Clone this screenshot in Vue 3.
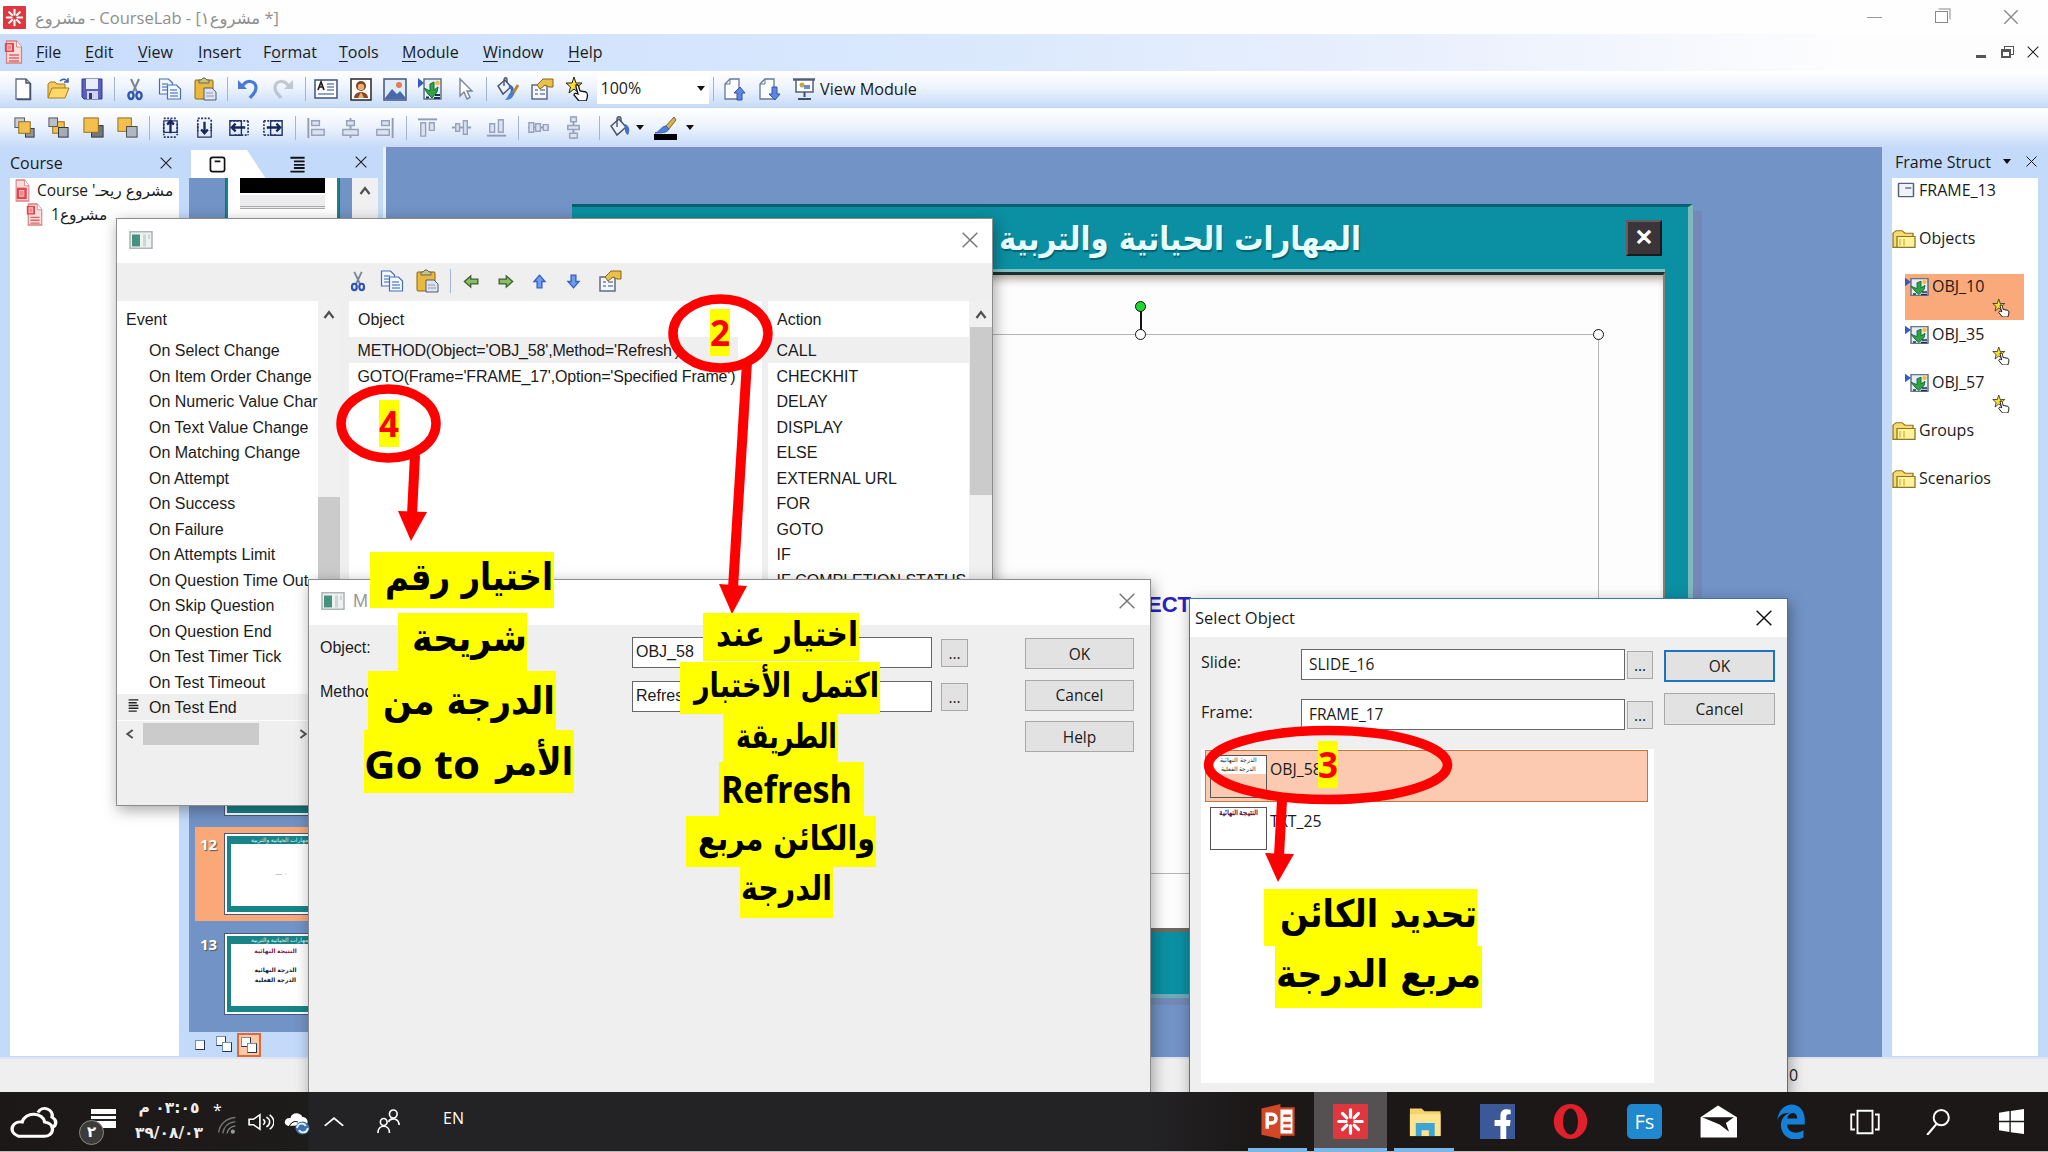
<script setup>
import { h } from 'vue';

const icons = {
  lab: '<rect width="24" height="24" rx="1" fill="#e0373f"/><g stroke="#fff" stroke-width="2.2" stroke-linecap="round"><path d="M12 4v5M12 15v5M4 12h5M15 12h5M6.5 6.5l3 3M14.5 14.5l3 3M17.500 6.500l-3 3M9.500 14.500l-3 3"/></g>',
  page: '<path d="M3 1h12l6 6v16H3z" fill="#fbdcdc" stroke="#d98080" stroke-width="1.500"/><path d="M15 1v6h6" fill="#fff" stroke="#d98080"/><rect x="1" y="3" width="11" height="9" fill="#e2474f"/><rect x="4" y="5" width="5" height="5" fill="#f08a8a" stroke="#fbd0d0"/><path d="M6 15h12M6 18h12M6 21h12" stroke="#d66" stroke-width="1.500"/>',
  project: '<path d="M3 1h12l6 6v16H3z" fill="#fbdcdc" stroke="#d98080" stroke-width="1.500"/><path d="M15 1v6h6" fill="#fff" stroke="#d98080"/><rect x="4" y="9" width="14" height="12" fill="#e2474f"/><rect x="8" y="12" width="6" height="6" fill="#f08a8a" stroke="#fbd0d0"/>',
  new: '<path d="M5 2h10l4 4v16H5z" fill="#fff" stroke="#5f6a80" stroke-width="1.300"/><path d="M15 2v4h4M19.500 6v16.500H6" fill="none" stroke="#48526a" stroke-width="1.500"/>',
  open: '<path d="M2 21V7l2-2h5l2 2h8v4" fill="#f3c95b" stroke="#a87a1c"/><path d="M2 21l4-10h17l-4 10z" fill="#ffd868" stroke="#a87a1c"/><path d="M14 4c3-3 6-2 8 1M22 1v4h-4" fill="none" stroke="#3c5ea8" stroke-width="1.500"/>',
  save: '<path d="M2 2h20v20H4l-2-2z" fill="#5c5fc0" stroke="#34388c"/><rect x="6" y="2" width="12" height="10" fill="#e9eefb"/><rect x="7" y="14" width="11" height="8" fill="#cfd4e8"/><rect x="9" y="16" width="3" height="6" fill="#34388c"/>',
  cut: '<path d="M8 2l6 13M16 2l-6 13" stroke="#7b8597" stroke-width="2"/><g fill="none" stroke="#2f55b4" stroke-width="2.400"><ellipse cx="8" cy="18.500" rx="2.600" ry="3.500"/><ellipse cx="16" cy="18.500" rx="2.600" ry="3.500"/></g>',
  copy: '<g fill="#f4f8ff" stroke="#4a6cb5" stroke-width="1.200"><path d="M1.500 2h9l4 4v11h-13z"/><path d="M9.500 8h9l4 4v10h-13z"/></g><path d="M4 7h6M4 10h5M4 13h5M12 13h7M12 16h8M12 19h8" stroke="#6f90d6" stroke-width="1.300"/>',
  paste: '<rect x="2" y="3" width="18" height="19" rx="1" fill="#eab93c" stroke="#8a6414"/><path d="M6 5V3h2l2-2h2l2 2h2v3H6z" fill="#c8c47a" stroke="#666"/><path d="M11 11h8l4 4v8H11z" fill="#dfe3ee" stroke="#4c5a7a"/><path d="M13 16h7M13 19h8" stroke="#8c98b4"/>',
  undo: '<path d="M2 3v9h9z" fill="#4a78d4"/><path d="M6 10C10 2 20 3 20 11c0 5-4 7-6 10" fill="none" stroke="#4a78d4" stroke-width="3.200"/>',
  redo: '<g opacity=".6"><path d="M22 3v9h-9z" fill="#a3aab6"/><path d="M18 10C14 2 4 3 4 11c0 5 4 7 6 10" fill="none" stroke="#a3aab6" stroke-width="3.200"/></g>',
  textbox: '<rect x="1" y="3" width="22" height="18" fill="#fff" stroke="#4d5c80" stroke-width="1.600"/><path d="M4 13l3-8 3 8M5 10h4" fill="none" stroke="#222" stroke-width="1.700"/><path d="M13 7h7M13 10h7M13 13h7M4 17h16" stroke="#6c86ba" stroke-width="1.300"/>',
  person: '<rect x="2" y="2" width="20" height="21" fill="#fff" stroke="#333" stroke-width="1.600"/><circle cx="12" cy="9" r="5" fill="#7a4428"/><circle cx="12" cy="10" r="3.200" fill="#eeb070"/><path d="M5 21c0-8 14-8 14 0z" fill="#8b4a2a"/><path d="M12 15l-3 6h6z" fill="#e8b080"/>',
  picture: '<rect x="1" y="2" width="22" height="21" fill="#dfeafb" stroke="#4d5c80" stroke-width="1.600"/><circle cx="16" cy="8" r="3" fill="#e77a52"/><path d="M2 21l7-9 5 5 3-3 5 6v2H2z" fill="#4868ae"/>',
  object: '<rect x="6" y="2" width="17" height="20" fill="#e6edf9" stroke="#5c6883" stroke-width="1.400"/><path d="M0 1l6 5-6 5z" fill="#3a58c4"/><path d="M6 11l4 6 4 4 5-6 1-5-4 3V5l-4 2v7z" fill="#2fa447" stroke="#166a2c"/><circle cx="19.500" cy="6" r="2.300" fill="#f3bc3a"/><path d="M8 20.500h3M17 18h5M16 21h6" stroke="#222d5a" stroke-width="1.800"/>',
  pointer: '<path d="M7 2v17l4-4 3 7 3-1.500-3-6.500h5z" fill="#fff" stroke="#7b8494" stroke-width="1.400"/>',
  bucket: '<path d="M3 10l8-7 7 8-9 8z" fill="#eef3fc" stroke="#48546e" stroke-width="1.500"/><path d="M9 11V3c0-3 4-3 4 0v3" fill="none" stroke="#48546e" stroke-width="1.400"/><path d="M17 8c5 2 5 7 3 11-3-1-4-7-3-11z" fill="#4471c6"/>',
  paint: '<path d="M2 9l7-6 6 7-8 7z" fill="#eef3fc" stroke="#48546e" stroke-width="1.500"/><path d="M8 9V3c0-3 3-3 3 0v3" fill="none" stroke="#48546e" stroke-width="1.400"/><path d="M13 9c4 1 4 5 2 9" stroke="#3a67c4" stroke-width="3" fill="none"/><path d="M22 8l-6 10" stroke="#b5893a" stroke-width="3"/><path d="M18 15c0 5-3 8-9 8 3-2 3-6 6-8z" fill="#4c7fd4"/>',
  props: '<rect x="2" y="8" width="15" height="14" fill="#f4f7fd" stroke="#56617c" stroke-width="1.400"/><path d="M5 13h3M10 13h5M5 17h3M10 17h5" stroke="#7284ac" stroke-width="1.600"/><path d="M7 8l6-6h10v8h-4l-4-2-5 4z" fill="#e9c04a" stroke="#856617"/>',
  star: '<path d="M9 0l2 6h6l-4.500 4L14 16 9 12l-5 4 1.500-6L1 6h6z" fill="#f8dd37" stroke="#222"/><path d="M11 8c2-1 3 1 3 3l1 3 6 1c2 1 2 5 0 9h-7l-5-6c0-2 2-2 4-1L11 10z" fill="#fff" stroke="#111" stroke-width="1.300"/>',
  import: '<path d="M3 22V7l5-5h9v20z" fill="#fbfcff" stroke="#6a7694" stroke-width="1.300"/><path d="M3 7h5V2" fill="none" stroke="#6a7694"/><path d="M18 10l5 6h-3v7h-5v-7h-3z" fill="#5f86df" stroke="#3253a8"/>',
  export: '<path d="M3 22V7l5-5h9v20z" fill="#fbfcff" stroke="#6a7694" stroke-width="1.300"/><path d="M3 7h5V2" fill="none" stroke="#6a7694"/><path d="M18 23l5-6h-3v-7h-5v7h-3z" fill="#5f86df" stroke="#3253a8"/>',
  screen: '<path d="M1 2.500h22" stroke="#555f7c" stroke-width="2.500"/><rect x="4" y="3" width="17" height="12" fill="#fff" stroke="#555f7c" stroke-width="1.500"/><circle cx="10" cy="8" r="2.500" fill="#c4a83a"/><rect x="12" y="8" width="6" height="4" fill="#6b8bcc"/><path d="M12.500 15v5M6 22h13" stroke="#444c66" stroke-width="2"/>',
  front: '<rect x="2" y="2" width="10" height="10" fill="#c9ced8" stroke="#555"/><rect x="13" y="13" width="9" height="9" fill="#8f95a3" stroke="#333"/><rect x="6" y="6" width="12" height="12" fill="#f3c04e" stroke="#8d6c1e"/>',
  back: '<rect x="6" y="6" width="12" height="12" fill="#f3c04e" stroke="#8d6c1e"/><rect x="2" y="2" width="9" height="9" fill="#b9bfcb" stroke="#555"/><rect x="12" y="12" width="10" height="10" fill="#a3aab8" stroke="#333"/>',
  forward: '<rect x="10" y="10" width="12" height="12" fill="#6f7686" stroke="#333"/><rect x="2" y="2" width="15" height="15" fill="#f3c04e" stroke="#8d6c1e"/>',
  backward: '<rect x="2" y="2" width="14" height="14" fill="#f3c04e" stroke="#8d6c1e"/><rect x="11" y="11" width="11" height="11" fill="#b0b6c3" stroke="#444"/>',
  alignTop: '<path d="M5 2.500h14M5 22h14M5 8v12M19 8v12" stroke="#27356a" stroke-width="1.800" stroke-dasharray="2 1.500"/><path d="M5 5h14v12H5z" fill="none" stroke="#27356a" stroke-width="1.300"/><path d="M12 18V5M8.500 9L12 5l3.500 4" fill="none" stroke="#19265c" stroke-width="2.400"/>',
  alignBottom: '<path d="M5 2.500h14M5 4v12M19 4v12" stroke="#27356a" stroke-width="1.800" stroke-dasharray="2 1.500"/><path d="M5 8v14h14V8" fill="none" stroke="#27356a" stroke-width="1.300"/><path d="M12 6v12M8.500 14l3.500 4 3.500-4" fill="none" stroke="#19265c" stroke-width="2.400"/>',
  alignLeft: '<path d="M3 5v15h12V5z" fill="none" stroke="#27356a" stroke-width="1.500"/><path d="M22 5v15M3 5h19M8 20h14" stroke="#27356a" stroke-width="1.800" stroke-dasharray="2 1.500"/><path d="M19 12H5M9 8l-4 4 4 4" fill="none" stroke="#19265c" stroke-width="2.400"/>',
  alignRight: '<path d="M9 5v15h12V5z" fill="none" stroke="#27356a" stroke-width="1.500"/><path d="M2 5v15M2 5h19M2 20h14" stroke="#27356a" stroke-width="1.800" stroke-dasharray="2 1.500"/><path d="M5 12h14M15 8l4 4-4 4" fill="none" stroke="#19265c" stroke-width="2.400"/>',
  gLeft: '<path d="M3.500 2v21" stroke="#929cb3" stroke-width="2"/><path d="M7 5h8v5H7zM7 14h13v6H7z" fill="#dbe3f3" stroke="#98a2b8" stroke-width="1.500"/>',
  gCenter: '<path d="M12 2v21" stroke="#929cb3" stroke-width="2"/><path d="M8 5h8v5H8zM4 14h16v6H4z" fill="#dbe3f3" stroke="#98a2b8" stroke-width="1.500"/>',
  gRight: '<path d="M20.500 2v21" stroke="#929cb3" stroke-width="2"/><path d="M9 5h8v5H9zM4 14h13v6H4z" fill="#dbe3f3" stroke="#98a2b8" stroke-width="1.500"/>',
  gTop: '<path d="M2 3.500h20" stroke="#929cb3" stroke-width="2"/><path d="M5 7h5v14H5zM14 7h5v8h-5z" fill="#dbe3f3" stroke="#98a2b8" stroke-width="1.500"/>',
  gMiddle: '<path d="M2 12h20" stroke="#929cb3" stroke-width="2"/><path d="M6 8h4v8H6zM14 5h4v14h-4z" fill="#dbe3f3" stroke="#98a2b8" stroke-width="1.500"/>',
  gBottom: '<path d="M2 20.500h20" stroke="#929cb3" stroke-width="2"/><path d="M5 8h5v9H5zM14 4h5v13h-5z" fill="#dbe3f3" stroke="#98a2b8" stroke-width="1.500"/>',
  gHoriz: '<path d="M1 12h22" stroke="#929cb3" stroke-width="2"/><path d="M2 7h5v10H2zM9 8h5v8H9zM17 9h5v6h-5z" fill="#dbe3f3" stroke="#98a2b8" stroke-width="1.500"/>',
  gVert: '<path d="M12 0v24" stroke="#929cb3" stroke-width="2"/><path d="M9 1h6v5H9zM6 10h12v4H6zM8 18h8v5H8z" fill="#dbe3f3" stroke="#98a2b8" stroke-width="1.500"/>',
  pen: '<path d="M21 1l2 3-8 10-3-3z" fill="#d9b258" stroke="#80622a"/><path d="M13 10l3 3c-2 4-8 4-14 4 5-1 5-6 11-7z" fill="#4d83d6" stroke="#3460a8"/><path d="M1 18h23v6H1z" fill="#000"/>',
  left: '<path d="M3 12l8-7v4h9v6h-9v4z" fill="#86bf5e" stroke="#3f5f35" stroke-width="1.700"/>',
  right: '<path d="M21 12l-8-7v4H4v6h9v4z" fill="#86bf5e" stroke="#3f5f35" stroke-width="1.700"/>',
  up: '<path d="M12 4l7 8h-4v8H9v-8H5z" fill="#6f9cf2" stroke="#3560bb" stroke-width="1.700"/>',
  down: '<path d="M12 20l7-8h-4V4H9v8H5z" fill="#6f9cf2" stroke="#3560bb" stroke-width="1.700"/>',
  close: '<path d="M4 4l16 16M20 4L4 20" stroke="currentColor" stroke-width="1.600" fill="none"/>',
  caretUp: '<path d="M6 16l6-8 6 8" stroke="#505050" stroke-width="3" fill="none"/>',
  caretLeft: '<path d="M16 6l-8 6 8 6" stroke="#505050" stroke-width="3" fill="none"/>',
  caretRight: '<path d="M8 6l8 6-8 6" stroke="#505050" stroke-width="3" fill="none"/>',
  form: '<rect x="1" y="3" width="22" height="18" fill="#eef1f1" stroke="#a9b2b2" stroke-width="1.500"/><rect x="3" y="6" width="8" height="13" fill="#47917f"/><path d="M14 6h3v13h-3zM19 6h2v5h-2z" fill="#cdd5d5"/>',
  folder: '<path d="M1 22V5l3-3h6l3 3h8v17z" fill="#f4dd6c" stroke="#8d7726" stroke-width="1.300"/><path d="M5 22V9h18v13z" fill="#fff29b" stroke="#8d7726" stroke-width="1.300"/><path d="M8 12v8M12 12v8" stroke="#d9c04f" stroke-width="1.500"/>',
  frame: '<rect x="2" y="2" width="20" height="20" rx="1" fill="#eef3fb" stroke="#56617c" stroke-width="2"/><path d="M11 9h8" stroke="#56617c" stroke-width="2"/>',
  slideTab: '<rect x="2" y="2" width="20" height="20" rx="3" fill="none" stroke="#111" stroke-width="2.400"/><path d="M8 7.500h8" stroke="#111" stroke-width="2.400"/>',
  outline: '<path d="M2 2.500h20M7 7.500h15M7 12.500h15M7 17h15M2 22h20" stroke="#111" stroke-width="2.600"/>',
  lines: '<path d="M3 3h18M3 7.500h15M3 12h18M3 16.500h18M3 21h15" stroke="#222" stroke-width="2.300"/>',
  cloud: '<path d="M5 20c-6-3-3-10 2-9C9 4 18 5 19 11c6 1 5 9 0 9z" transform="translate(-.500 1) scale(.94 1)" fill="none" stroke="#fff" stroke-width="1.800"/><path d="M14 6c2-5 8-2 7 3 3 2 2 6-.500 7" fill="none" stroke="#fff" stroke-width="1.700"/>',
  sound: '<g fill="none" stroke="#fff" stroke-width="1.500"><path d="M1 9h4l6-5v16l-6-5H1zM14 9c2 2 2 4 0 6M17 6.500c4 3 4 8 0 11M20 4c5 5 5 11 0 16"/></g>',
  wifi: '<g fill="none" stroke-width="1.700"><path d="M2 21C3 11 11 4 22 3" stroke="#777"/><path d="M7 22C8 15 13 9 22 8" stroke="#777"/><path d="M12 22c1-5 4-8 10-9" stroke="#888"/></g><circle cx="19" cy="20" r="2.500" fill="#999"/>',
  sync: '<path d="M4 15C-2 13 1 6 6 7c1-6 9-6 11-1 4 0 6 4 4 8z" fill="#fff"/><path d="M5 15c2-4 5-5 8-4" fill="none" stroke="#1c1817"/><circle cx="17" cy="17" r="6.500" fill="#3a72b0"/><path d="M12 17c1-6 7-5 8-2M22 17c-1 6-7 5-8 2" stroke="#e8f2ff" stroke-width="1.800" fill="none"/>',
  chevron: '<path d="M2 17l10-10 10 10" fill="none" stroke="#fff" stroke-width="2.200"/>',
  people: '<g fill="none" stroke="#fff" stroke-width="1.700"><circle cx="7" cy="13" r="3.500"/><path d="M1 24c0-9 12-9 12 0"/><circle cx="17" cy="5" r="4"/><path d="M12 13c2-5 11-4 11 3"/></g>',
  ppt: '<path d="M13 3h10v18H13z" fill="#fff" stroke="#d24726" stroke-width="1.500"/><path d="M16 8h5M16 13h5M16 17h5" stroke="#d24726" stroke-width="1.700"/><path d="M1 3l13-3v24L1 21z" fill="#d24726"/><path d="M5 17V7h3c4 0 4 6 0 6H5" fill="none" stroke="#fff" stroke-width="2.400"/>',
  explorer: '<path d="M2 3h8l2 2h11v17H2z" fill="#f5d36b"/><path d="M2 7h21v15H2z" fill="#ffe490"/><path d="M6 22v-9h13v9h-4v-4h-5v4z" fill="#3da4d8"/>',
  facebook: '<rect width="24" height="24" fill="#3b5998"/><path d="M14 24v-9h-4v-4h4V8c0-4 3-5 7-4v3c-3 0-3 0-3 4h3l-.5 4H18v9z" fill="#fff"/>',
  opera: '<ellipse cx="12" cy="12" rx="11.500" ry="12" fill="#e0202c"/><ellipse cx="12" cy="12" rx="5.200" ry="9" fill="#1c1817"/>',
  blue: '<rect width="24" height="24" rx="3.500" fill="#2088cf"/>',
  mail: '<path d="M1 9L12 1l12 8v14H1z" fill="#fff"/><path d="M2 9h20l-5 4 2 6-6-5z" fill="#1c1817"/>',
  edge: '<path d="M1 11C3-3 22-3 23 10v4H9c0 6 8 7 13 4v5C13 27 3 22 4 13c1-4 4-6 7-7-7 0-9 3-10 5zM9 10h8c0-5-7-5-8 0z" fill="#1580d8"/>',
  taskview: '<g fill="none" stroke="#fff" stroke-width="1.500"><path d="M6 3h12v18H6zM4 6H1v12h3M20 6h3v12h-3"/></g>',
  search: '<circle cx="15" cy="8" r="7" fill="none" stroke="#fff" stroke-width="1.800"/><path d="M10.500 14L2 24" stroke="#fff" stroke-width="2"/>',
  windows: '<path d="M0 3.500l10-1.500v9.300H0zM11.300 1.800L24 0v11.300H11.300zM0 12.700h10V22L0 20.500zM11.300 12.700H24V24l-12.700-1.800z" fill="#fff"/>'
};

const Icon = (props) => h('svg', {
  viewBox: '0 0 24 24',
  width: props.w || props.size || 24,
  height: props.size || 24,
  preserveAspectRatio: 'none',
  innerHTML: icons[props.name]
});
Icon.props = ['name', 'size', 'w'];

const menus = ['File', 'Edit', 'View', 'Insert', 'Format', 'Tools', 'Module', 'Window', 'Help'];
const menuKeys = { Format: 1 };
const menuWidths = [49, 53, 60, 65, 76, 63, 81, 85, 60];

const mainTools = [
  ['new', 'open', 'save'],
  ['cut', 'copy', 'paste'],
  ['undo', 'redo'],
  ['textbox', 'person', 'picture', 'object', 'pointer'],
  ['paint', 'props', 'star']
];
const arrangeTools = [
  ['front', 'back', 'forward', 'backward'],
  ['alignTop', 'alignBottom', 'alignLeft', 'alignRight'],
  ['gLeft', 'gCenter', 'gRight'],
  ['gTop', 'gMiddle', 'gBottom'],
  ['gHoriz', 'gVert']
];
const actionTools = ['left', 'right', 'up', 'down', 'props'];

const events = [
  'On Select Change', 'On Item Order Change', 'On Numeric Value Char', 'On Text Value Change',
  'On Matching Change', 'On Attempt', 'On Success', 'On Failure', 'On Attempts Limit',
  'On Question Time Out', 'On Skip Question', 'On Question End', 'On Test Timer Tick',
  'On Test Timeout', 'On Test End'
];
const actions = ['CALL', 'CHECKHIT', 'DELAY', 'DISPLAY', 'ELSE', 'EXTERNAL URL', 'FOR', 'GOTO', 'IF', 'IF COMPLETION STATUS'];

const frameTree = [
  { text: 'FRAME_13', icon: 'frame' },
  { text: 'Objects', icon: 'folder' },
  { text: 'OBJ_10', icon: 'object', active: true },
  { text: 'OBJ_35', icon: 'object' },
  { text: 'OBJ_57', icon: 'object' },
  { text: 'Groups', icon: 'folder' },
  { text: 'Scenarios', icon: 'folder' }
];

// highlighted note lines: box x, y, w, h, then text x, width, baseline and size
const notes = [
  { x: 370, y: 552, w: 184, h: 56, tx: 385, tw: 168, b: 590, fs: 38, text: 'اختيار رقم' },
  { x: 398, y: 613, w: 129, h: 58, tx: 412, tw: 115, b: 651, fs: 38, text: 'شريحة' },
  { x: 368, y: 671, w: 188, h: 59, tx: 383, tw: 172, b: 714, fs: 38, text: 'الدرجة من' },
  { x: 364, y: 730, w: 210, h: 63, tx: 496, tw: 77, b: 775, fs: 38, text: 'الأمر' },
  { x: 703, y: 613, w: 156, h: 48, tx: 716, tw: 142, b: 646, fs: 34, text: 'اختيار عند' },
  { x: 680, y: 662, w: 200, h: 52, tx: 694, tw: 185, b: 697, fs: 34, text: 'اكتمل الأختبار' },
  { x: 723, y: 714, w: 115, h: 49, tx: 736, tw: 101, b: 748, fs: 34, text: 'الطريقة' },
  { x: 719, y: 762, w: 145, h: 54, tx: 721, tw: 131, b: 803, fs: 37, text: 'Refresh', latin: true },
  { x: 686, y: 816, w: 190, h: 51, tx: 698, tw: 177, b: 850, fs: 34, text: 'والكائن مربع' },
  { x: 740, y: 867, w: 93, h: 51, tx: 741, tw: 91, b: 900, fs: 34, text: 'الدرجة' },
  { x: 1264, y: 889, w: 213, h: 57, tx: 1280, tw: 197, b: 927, fs: 38, text: 'تحديد الكائن' },
  { x: 1275, y: 946, w: 207, h: 62, tx: 1276, tw: 205, b: 987, fs: 38, text: 'مربع الدرجة' }
];
const marks = [
  { n: 2, x: 710, y: 309, cx: 720.5, cy: 333.5, rx: 47.5, ry: 34.5, line: 'M747 362L733 588', head: '719,584 747,586 732,614' },
  { n: 4, x: 379, y: 400, cx: 388.5, cy: 423.5, rx: 47.5, ry: 34.5, line: 'M415 455L412 515', head: '398,511 427,512 411,541' },
  { n: 3, x: 1318, y: 741, cx: 1328, cy: 765, rx: 119.5, ry: 34.5, line: 'M1282 800L1279 856', head: '1265,853 1294,854 1278,882' }
];

const taskApps = [
  { icon: 'ppt', open: true },
  { icon: 'lab', open: true, active: true },
  { icon: 'explorer', open: true },
  { icon: 'facebook' },
  { icon: 'opera' },
  { icon: 'blue', label: 'Fs' },
  { icon: 'mail' },
  { icon: 'edge' },
  { icon: 'taskview', size: 30 },
  { icon: 'search', size: 26 },
  { icon: 'windows', size: 25 }
];
</script>

<template>
  <div class="screen">
    <header class="titlebar">
      <Icon name="lab" :size="23" />
      <span class="title">مشروع - CourseLab - [مشروع١ *]</span>
      <div class="window-buttons">
        <span class="minimize"></span>
        <span class="restore"></span>
        <Icon name="close" :size="20" />
      </div>
    </header>

    <nav class="menubar">
      <Icon name="page" :w="20" :size="24" class="menu-icon" />
      <span v-for="(m, i) in menus" :key="m" class="menu" :style="{ width: menuWidths[i] + 'px' }">{{ m.slice(0, menuKeys[m] || 0) }}<u>{{ m[menuKeys[m] || 0] }}</u>{{ m.slice((menuKeys[m] || 0) + 1) }}</span>
      <div class="child-buttons">
        <span class="child-min"></span>
        <span class="child-restore"></span>
        <Icon name="close" :size="16" />
      </div>
    </nav>

    <div class="toolbar first">
      <template v-for="(group, g) in mainTools" :key="g">
        <span v-if="g" class="sep"></span>
        <span v-for="t in group" :key="t" class="tool"><Icon :name="t" /></span>
      </template>
      <div class="zoom-box">
        <span>100%</span>
        <i class="tri"></i>
      </div>
      <span class="sep"></span>
      <span class="tool"><Icon name="import" /></span>
      <span class="tool"><Icon name="export" /></span>
      <span class="tool"><Icon name="screen" /></span>
      <span class="view-module">View Module</span>
    </div>

    <div class="toolbar second">
      <template v-for="(group, g) in arrangeTools" :key="g">
        <span v-if="g" class="sep"></span>
        <span v-for="t in group" :key="t" class="tool"><Icon :name="t" :size="23" /></span>
      </template>
      <span class="sep wide"></span>
      <span class="tool narrow"><Icon name="bucket" /></span>
      <i class="tri"></i>
      <span class="tool pen"><Icon name="pen" /></span>
      <i class="tri"></i>
    </div>

    <main class="work">
      <section class="course">
        <div class="panel-head">
          <span>Course</span>
          <Icon name="close" :size="16" />
        </div>
        <div class="course-tree">
          <div class="course-row"><Icon name="project" :w="17" :size="23" /><span>Course <bdi dir="rtl">مشروع ريحـ'</bdi></span></div>
          <div class="course-row child"><Icon name="page" :w="18" :size="23" /><span dir="rtl">مشروع1</span></div>
        </div>
      </section>

      <section class="slides">
        <div class="slide-tabs">
          <span class="slide-tab active"><Icon name="slideTab" :size="17" /></span>
          <span class="slide-tab"><Icon name="outline" :size="17" /></span>
          <Icon name="close" :size="16" />
        </div>
        <div class="slide-body">
          <div class="slide-list">
            <div class="thumb cut-top">
              <div class="thumb-black"></div>
              <div class="thumb-line"></div>
            </div>
            <div class="slide-gap"></div>
            <div class="thumb cut-bottom"></div>
            <div class="slide-row active">
              <b>12</b>
              <div class="thumb">
                <span class="thumb-title">المهارات الحياتية والتربية</span>
                <div class="thumb-page"><small>— ٠</small></div>
              </div>
            </div>
            <div class="slide-row">
              <b>13</b>
              <div class="thumb">
                <span class="thumb-title">المهارات الحياتية والتربية</span>
                <div class="thumb-page result"><em>النتيجة النهائية</em><span>الدرجة النهائية</span><span>الدرجة الفعلية</span></div>
              </div>
            </div>
          </div>
          <div class="slide-scroll"><Icon name="caretUp" :size="18" /></div>
        </div>
        <div class="slide-modes">
          <i class="mode"></i>
          <span class="mode-box"><i class="mode a"></i><i class="mode b"></i></span>
          <span class="mode-box active"><i class="mode a"></i><i class="mode b"></i></span>
        </div>
      </section>

      <section class="canvas">
        <div class="slide">
          <div class="slide-head">
            <svg class="slide-title" width="380" height="60">
              <text x="8" y="38" textLength="362" lengthAdjust="spacingAndGlyphs">المهارات الحياتية والتربية</text>
            </svg>
            <span class="slide-close">✕</span>
          </div>
          <div class="slide-page">
            <div class="selection">
              <i class="stem"></i>
              <i class="handle green"></i>
              <i class="handle top"></i>
              <i class="handle corner"></i>
              <b>OBJECT</b>
            </div>
          </div>
        </div>
      </section>

      <section class="struct">
        <div class="panel-head">
          <span>Frame Struct</span>
          <i class="tri"></i>
          <Icon name="close" :size="15" />
        </div>
        <div class="struct-tree">
          <div v-for="row in frameTree" :key="row.text" class="struct-row" :class="{ object: row.icon === 'object', active: row.active }">
            <Icon :name="row.icon" :w="row.icon === 'frame' ? 18 : 24" :size="row.icon === 'frame' ? 16 : 20" />
            <span>{{ row.text }}</span>
            <Icon v-if="row.icon === 'object'" name="star" :size="18" class="row-star" />
          </div>
        </div>
      </section>
    </main>

    <div class="statusbar"><span>0</span></div>

    <!-- action editor window -->
    <div class="dialog actions">
      <div class="dialog-title">
        <Icon name="form" :w="24" :size="22" />
        <Icon name="close" :size="22" class="dialog-close" />
      </div>
      <div class="action-tools">
        <Icon name="cut" :size="22" />
        <Icon name="copy" />
        <Icon name="paste" />
        <span class="sep"></span>
        <Icon v-for="t in actionTools" :key="t" :name="t" :size="t === 'props' ? 24 : 19" />
      </div>
      <div class="action-body">
        <div class="event-pane">
          <div class="event-main">
            <div class="event-list">
              <div class="list-head">Event</div>
              <div v-for="e in events" :key="e" class="list-row" :class="{ picked: e === 'On Test End' }">
                <Icon v-if="e === 'On Test End'" name="lines" :w="13" :size="15" class="row-mark" />{{ e }}
              </div>
            </div>
            <div class="vscroll">
              <Icon name="caretUp" :size="18" />
              <div class="vthumb event"></div>
            </div>
          </div>
          <div class="hscroll">
            <Icon name="caretLeft" :size="16" />
            <div class="hthumb"></div>
            <Icon name="caretRight" :size="16" />
          </div>
        </div>
        <div class="object-list">
          <div class="list-head">Object</div>
          <div class="list-row picked">METHOD(Object='OBJ_58',Method='Refresh')</div>
          <div class="list-row">GOTO(Frame='FRAME_17',Option='Specified Frame')</div>
        </div>
        <div class="action-list">
          <div class="list-head">Action</div>
          <div v-for="a in actions" :key="a" class="list-row" :class="{ picked: a === 'CALL' }">{{ a }}</div>
        </div>
        <div class="vscroll">
          <Icon name="caretUp" :size="18" />
          <div class="vthumb"></div>
        </div>
      </div>
    </div>

    <!-- method window -->
    <div class="dialog method">
      <div class="dialog-title">
        <Icon name="form" :w="24" :size="22" />
        <span class="dim">M</span>
        <Icon name="close" :size="22" class="dialog-close" />
      </div>
      <div class="method-body">
        <div class="labels"><span>Object:</span><span>Method:</span></div>
        <div class="fields">
          <div class="field-row"><div class="input">OBJ_58</div><button>...</button></div>
          <div class="field-row"><div class="input">Refresh</div><button>...</button></div>
        </div>
        <div class="buttons"><button>OK</button><button>Cancel</button><button>Help</button></div>
      </div>
    </div>

    <!-- object picker -->
    <div class="dialog select">
      <div class="dialog-title">
        <span>Select Object</span>
        <Icon name="close" :size="22" class="dialog-close" />
      </div>
      <div class="select-body">
        <div class="select-main">
          <div class="select-row"><label>Slide:</label><div class="input">SLIDE_16</div><button>...</button></div>
          <div class="select-row"><label>Frame:</label><div class="input">FRAME_17</div><button>...</button></div>
          <div class="pick-list">
            <div class="pick active">
              <div class="pick-thumb"><div class="pick-lines"><span>الدرجة النهائية</span><span>الدرجة الفعلية</span></div></div>
              <span>OBJ_58</span>
            </div>
            <div class="pick">
              <div class="pick-thumb"><em>النتيجة النهائية</em></div>
              <span>TXT_25</span>
            </div>
          </div>
        </div>
        <div class="select-buttons"><button class="default">OK</button><button>Cancel</button></div>
      </div>
    </div>

    <footer class="taskbar">
      <Icon name="cloud" :w="48" :size="38" class="cloud" />
      <div class="notify"><i></i><span>٢</span></div>
      <div class="clock"><span dir="rtl">٠٣:٠٥ م</span><bdo dir="ltr">٣٩/٠٨/٠٣</bdo></div>
      <div class="network"><span>*</span><Icon name="wifi" :size="20" /></div>
      <Icon name="sound" :w="26" :size="22" class="sound" />
      <Icon name="sync" :w="26" :size="24" class="sync" />
      <Icon name="chevron" :w="22" :size="18" class="chev" />
      <Icon name="people" :w="23" :size="24" class="people" />
      <span class="lang">EN</span>
      <div class="apps">
        <div v-for="app in taskApps" :key="app.icon" class="app" :class="{ open: app.open, active: app.active }">
          <Icon :name="app.icon" :size="app.size || 35" :w="app.icon === 'mail' ? 38 : app.size || (app.icon === 'edge' ? 30 : 35)" />
          <span v-if="app.label">{{ app.label }}</span>
        </div>
      </div>
    </footer>

    <svg class="overlay" viewBox="0 0 2048 1152" width="2048" height="1152">
      <g v-for="m in marks" :key="m.n">
        <ellipse :cx="m.cx" :cy="m.cy" :rx="m.rx" :ry="m.ry" fill="none" stroke="#f00" stroke-width="9.500" />
        <path :d="m.line" stroke="#f00" stroke-width="10" />
        <polygon :points="m.head" fill="#f00" />
        <rect :x="m.x" :y="m.y" width="20" height="47" fill="#ff0" />
        <text :x="m.x" :y="m.y + 37" textLength="20" lengthAdjust="spacingAndGlyphs" class="mark">{{ m.n }}</text>
      </g>
      <g v-for="n in notes" :key="n.y">
        <rect :x="n.x" :y="n.y" :width="n.w" :height="n.h" fill="#ff0" />
        <text :x="n.tx" :y="n.b" :font-size="n.fs" :textLength="n.tw" lengthAdjust="spacingAndGlyphs" class="note" :class="{ latin: n.latin }">{{ n.text }}</text>
      </g>
      <text x="364" y="779" font-size="40" textLength="116" lengthAdjust="spacingAndGlyphs" class="note latin">Go to</text>
    </svg>
  </div>
</template>

<style>
body {
  margin: 0;
  overflow: hidden;
}
</style>

<style scoped>
* {
  box-sizing: border-box;
}

svg {
  flex: none;
  display: block;
}

.screen {
  position: relative;
  width: 2048px;
  height: 1152px;
  overflow: hidden;
  display: flex;
  flex-direction: column;
  background: #c3dafb;
  color: #1b1b1b;
  font-family: "Open Sans", "Noto Sans", "DejaVu Sans", sans-serif;
  font-size: 16px;
}

.titlebar {
  height: 34px;
  flex: none;
  display: flex;
  align-items: center;
  padding: 0 27px 0 3px;
  background: #fefefe;
  color: #8f8f8f;
}

.title {
  margin-left: 9px;
  white-space: nowrap;
  font-size: 16.5px;
}

.window-buttons {
  margin-left: auto;
  display: flex;
  align-items: center;
  color: #888;
}

.minimize {
  width: 15px;
  height: 1px;
  background: #999;
  margin-right: 53px;
}

.restore {
  width: 13px;
  height: 12px;
  border: 1px solid #888;
  box-shadow: 2px -2px 0 -0.500px #fff, 3px -3px 0 -0.500px #888;
  margin-right: 53px;
}

.menubar {
  height: 37px;
  flex: none;
  display: flex;
  align-items: center;
  padding: 0 7px 2px 4px;
  background: linear-gradient(90deg, #c8dcfd, #d9e8fd 45%, #eaf0fd 70%, #fdfdfe 90%);
}

.menu-icon {
  margin-right: 12px;
}

.menu u {
  text-underline-offset: 3px;
}

.child-buttons {
  margin-left: auto;
  display: flex;
  align-items: center;
  color: #222;
}

.child-min {
  width: 10px;
  height: 3px;
  background: #555;
  margin: 9px 15px 0 0;
}

.child-restore {
  width: 10px;
  height: 9px;
  border: 2px solid #555;
  border-top-width: 3px;
  box-shadow: 3px -3px 0 -1px #fff, 3px -3px 0 0 #555;
  margin: 4px 14px 0 0;
}

.toolbar {
  flex: none;
  display: flex;
  align-items: center;
  background: linear-gradient(#fff, #eef4fd 45%, #c6dbf9);
}

.first {
  height: 37px;
  padding-left: 5.5px;
  border-bottom: 1px solid #c8d3ec;
}

.second {
  height: 39px;
  padding-left: 7.5px;
}

.tool {
  width: 34.7px;
  display: flex;
  justify-content: center;
}

.second .tool {
  width: 34.3px;
}

.second .narrow {
  width: 32px;
}

.second .pen {
  width: 42px;
}

.sep {
  width: 1px;
  height: 24px;
  background: #a5b4d2;
  margin: 0 3px 0 4.5px;
}

.wide {
  margin: 0 4px 0 9px;
}

.zoom-box {
  width: 112px;
  height: 30px;
  margin-left: 2px;
  padding: 0 4px 2px 4px;
  display: flex;
  align-items: center;
  justify-content: space-between;
  background: #fff;
  font-size: 16px;
}

.tri {
  border: 4.5px solid transparent;
  border-top: 5px solid #111;
  border-bottom: 0;
}

.view-module {
  white-space: nowrap;
  font-size: 16.2px;
  margin-left: -1px;
}

.work {
  flex: 1;
  min-height: 0;
  display: flex;
}

.panel-head {
  height: 31px;
  display: flex;
  align-items: center;
  justify-content: space-between;
}

.course {
  width: 180px;
  padding: 0 1px 1px 10px;
  display: flex;
  flex-direction: column;
}

.course .panel-head {
  padding: 0 5px 0 0;
}

.course-tree {
  flex: 1;
  background: #fff;
  overflow: hidden;
  font-size: 15.5px;
}

.course-row {
  height: 24px;
  display: flex;
  align-items: center;
  gap: 6px;
  padding-left: 4px;
  white-space: nowrap;
}

.course-row.child {
  padding-left: 16px;
  gap: 7px;
}

.slides {
  width: 206px;
  padding-left: 9px;
  display: flex;
  flex-direction: column;
  border-right: 3px solid #e9f1fe;
}

.slide-tabs {
  height: 31px;
  display: flex;
  align-items: center;
  padding: 3px 0 0 2px;
}

.slide-tab {
  width: 80px;
  height: 28px;
  padding-left: 18px;
  display: flex;
  align-items: center;
}

.slide-tab.active {
  background: #fff;
  clip-path: polygon(0 0, 70% 0, 93% 100%, 0 100%);
}

.slide-tab + svg {
  margin: -4px 0 0 2px;
}

.slide-body {
  flex: 1;
  min-height: 0;
  display: flex;
}

.slide-list {
  width: 163px;
  background: #7293c6;
  overflow: hidden;
}

.thumb {
  width: 113px;
  height: 80px;
  border: 2px solid #fff;
  outline: 1px solid #44597e;
  background: #188488;
  padding: 0 4px 6px;
  overflow: hidden;
  display: flex;
  flex-direction: column;
}

.thumb-title {
  height: 8px;
  font-size: 6px;
  line-height: 8px;
  text-align: center;
  color: #d8f0f0;
  white-space: nowrap;
}

.thumb-page {
  flex: 1;
  background: #fff;
  text-align: center;
  padding-top: 25px;
  font-size: 6px;
}

.thumb-page small {
  font-size: 7px;
  color: #999;
}

.thumb-page.result {
  display: flex;
  flex-direction: column;
  padding: 0 12px 0 0;
  font-size: 6px;
  line-height: 10px;
  font-weight: bold;
}

.result em {
  font-style: normal;
  color: #8a1040;
  margin-bottom: 6px;
  line-height: 15px;
}

.cut-top {
  height: 45px;
  margin-left: 37px;
  border-top: 0;
  background: #fff;
  border-color: #188488;
  padding: 0 12px;
}

.thumb-black {
  height: 15px;
  background: #000;
}

.thumb-line {
  height: 14px;
  margin-top: 2px;
  background: #ececee;
  border-bottom: 3px double #aaa;
}

.slide-gap {
  height: 557px;
}

.cut-bottom {
  height: 35px;
  margin-left: 36px;
  border-top: 0;
}

.slide-row {
  margin-left: 6px;
  width: 157px;
  height: 94px;
  padding: 7px 0 0 5px;
  display: flex;
}

.slide-row.active {
  margin-top: 12px;
  background: #fba878;
}

.slide-row:not(.active) {
  padding-top: 13px;
}

.slide-row b {
  width: 25px;
  color: #fff;
  font-size: 15px;
  line-height: 20px;
  text-shadow: 1px 1px 1px #555;
}

.slide-scroll {
  width: 26px;
  background: #f0f0f0;
  padding: 4px 4px;
}

.slide-modes {
  height: 25px;
  display: flex;
  align-items: center;
  padding-left: 6px;
}

.mode {
  display: block;
  width: 10px;
  height: 10px;
  background: #fdfefe;
  border: 1px solid #788da8;
  border-right-color: #27344f;
  border-bottom-color: #27344f;
}

.mode-box {
  position: relative;
  width: 24px;
  height: 24px;
  margin-left: 8px;
}

.mode-box.active {
  margin-left: 0;
  border: 2px solid #e06a35;
  background: #ffc8a6;
}

.mode-box .mode {
  position: absolute;
}

.mode.a {
  left: 3px;
  top: 3px;
}

.mode.b {
  left: 9px;
  top: 9px;
}

.active .mode.a {
  left: 2px;
  top: 2px;
}

.active .mode.b {
  left: 8px;
  top: 8px;
}

.canvas {
  width: 1496px;
  background: #7293c6;
  border-top: 3px solid #7b8fc4;
  padding: 54px 0 0 186px;
}

.slide {
  width: 1121px;
  height: 794px;
  background: #0b8fa2;
  border-top: 3px solid #07606f;
  border-right: 5px solid #7fb7bf;
  border-bottom: 4px solid #6faab8;
  box-shadow: 9px 7px 0 #7288b7;
}

.slide-head {
  height: 65px;
  display: flex;
  align-items: flex-start;
  padding-left: 419px;
}

.slide-title {
  margin-top: 5px;
}

.slide-title text {
  font: bold 33px "DejaVu Sans", sans-serif;
  fill: #e7fdff;
  text-shadow: 1px 2px 1px #06616e;
}

.slide-close {
  margin: 13px 0 0 255px;
  width: 36px;
  height: 36px;
  background: #3b3438;
  border: 2px solid #655c62;
  border-right-color: #18191b;
  border-bottom-color: #18191b;
  color: #fff;
  -webkit-text-stroke: 1px #fff;
  font: bold 22px/32px "DejaVu Sans", sans-serif;
  text-align: center;
}

.slide-page {
  width: 1063px;
  margin-left: 30px;
  height: 660px;
  background: #fdfdfd;
  border-top: 3px solid #1d302f;
  border-right: 2px solid #8a7f70;
  border-bottom: 4px solid #70695f;
  box-shadow: inset 0 8px 8px -4px #aaa39a, 0 -3px 0 #7fc0c2;
}

.selection {
  position: relative;
  margin: 59px 0 0 80px;
  width: 917px;
  height: 540px;
  border: 1px solid #b5b5b5;
}

.selection b {
  position: absolute;
  right: 407px;
  top: 257px;
  font: bold 22px/26px "Liberation Sans", sans-serif;
  color: #2a22c0;
}

.handle {
  position: absolute;
  width: 11px;
  height: 11px;
  border: 1.5px solid #111;
  border-radius: 50%;
  background: #fff;
}

.corner {
  right: -6px;
  top: -6px;
}

.top {
  left: 452px;
  top: -6px;
}

.green {
  left: 452px;
  top: -34px;
  background: #1fd62c;
}

.stem {
  position: absolute;
  left: 457px;
  top: -26px;
  width: 1.5px;
  height: 22px;
  background: #111;
}

.struct {
  flex: 1;
  padding: 0 10px 1px 10px;
  display: flex;
  flex-direction: column;
}

.struct .panel-head {
  padding: 0 0 2px 3px;
  margin-right: -1px;
}

.struct-tree {
  flex: 1;
  background: #fff;
}

.struct-row {
  height: 48px;
  display: flex;
  align-items: flex-start;
  gap: 3px;
  position: relative;
}

.struct-row > span {
  padding-top: 1px;
}

.struct-row > svg {
  margin-top: 3px;
}

.struct-row:first-child > svg {
  margin: 4px 1px 0 5px;
}

.struct-row.object {
  margin-left: 13px;
  width: 119px;
}

.struct-row.object.active {
  background: #f9a97a;
  border-bottom: 2px solid #fff;
}

.struct-row .row-star {
  position: absolute;
  left: 87px;
  top: 22px;
}

.statusbar {
  height: 35px;
  flex: none;
  margin-bottom: 60px;
  background: #efeff0;
  border-top: 2px solid #dfe5ee;
  padding: 5px 0 0 1789px;
}

.dialog {
  position: absolute;
  background: #f0eff0;
  border: 1px solid #8d8d90;
  box-shadow: 2px 4px 14px rgba(0, 0, 0, 0.35);
  font-family: "Liberation Sans", sans-serif;
  display: flex;
  flex-direction: column;
}

.dialog-title {
  flex: none;
  display: flex;
  align-items: center;
  background: #fff;
}

.dialog-close {
  margin-left: auto;
  color: #777;
}

.actions {
  left: 116px;
  top: 218px;
  width: 877px;
  height: 588px;
}

.actions .dialog-title {
  height: 44px;
  padding: 0 11px 3px 12px;
}

.action-tools {
  height: 38px;
  display: flex;
  align-items: center;
  padding: 0 0 2px 230px;
  gap: 11px;
}

.action-tools .sep {
  margin: 0;
}

.action-tools svg:nth-child(n + 5) {
  margin-right: 4px;
}

.action-body {
  flex: 1;
  min-height: 0;
  display: flex;
}

.event-pane {
  width: 223px;
  height: 444px;
  display: flex;
  flex-direction: column;
}

.event-main {
  height: 420px;
  display: flex;
}

.event-list {
  width: 201px;
  background: #fff;
}

.list-head {
  height: 36px;
  line-height: 38px;
  padding-left: 9px;
}

.event-list .list-row {
  padding-left: 32px;
}

.list-row {
  height: 25.5px;
  line-height: 27px;
  padding-left: 8.5px;
  letter-spacing: -0.16px;
  white-space: nowrap;
  overflow: hidden;
  position: relative;
}

.event-list .list-row,
.action-list .list-row {
  letter-spacing: 0;
}

.row-mark {
  position: absolute;
  left: 10px;
  top: 4px;
}

.picked {
  background: #efeff0;
}

.vscroll {
  width: 23px;
  background: #f0f0f0;
  display: flex;
  flex-direction: column;
  align-items: center;
  padding-top: 5px;
}

.vthumb {
  width: 22px;
  height: 168px;
  margin-top: 3px;
  background: #cbcbcb;
}

.vthumb.event {
  height: 160px;
  margin-top: 173px;
}

.hscroll {
  height: 24px;
  padding: 2px 5px 0;
  display: flex;
  align-items: center;
}

.hthumb {
  width: 116px;
  height: 22px;
  margin: 0 36px 0 5px;
  background: #cbcbcb;
}

.object-list {
  width: 413px;
  margin-left: 9px;
  background: #fff;
}

.object-list .picked {
  margin-right: 24px;
}

.action-list {
  width: 201px;
  margin-left: 6px;
  background: #fff;
}

.method {
  left: 308px;
  top: 579px;
  width: 843px;
  height: 520px;
}

.method .dialog-title {
  height: 45px;
  padding: 0 12px 3px 12px;
}

.dim {
  margin-left: 8px;
  color: #999;
  font-size: 18px;
}

.method-body {
  display: flex;
  padding-top: 12px;
}

.labels {
  width: 323px;
  padding-left: 11px;
  display: flex;
  flex-direction: column;
  line-height: 43.5px;
  margin-top: -11px;
  font-size: 16px;
}

.fields {
  display: flex;
  flex-direction: column;
  gap: 13px;
}

.field-row {
  display: flex;
  align-items: center;
  gap: 9px;
}

.input {
  width: 300px;
  height: 31px;
  border: 1px solid #666;
  background: #fff;
  line-height: 28px;
  padding-left: 3px;
}

button {
  padding: 0;
  background: #e2e2e3;
  border: 1px solid #a8a8a8;
  font: 15.5px "Open Sans", sans-serif;
  color: #1b1b1b;
}

.field-row button {
  width: 27px;
  height: 28px;
}

.buttons {
  margin: 1px 0 0 57px;
  display: flex;
  flex-direction: column;
  gap: 10.500px;
}

.buttons button {
  width: 109px;
  height: 31px;
}

.select {
  left: 1189px;
  top: 598px;
  width: 599px;
  height: 500px;
  border-color: #3578b5;
  font-family: "Open Sans", sans-serif;
}

.select .dialog-title {
  height: 38px;
  padding: 0 12px 1px 5px;
  font-size: 16.5px;
}

.select .dialog-close {
  color: #111;
}

.select-body {
  display: flex;
  padding: 12px 0 0 11px;
}

.select-main {
  width: 453px;
}

.select-row {
  display: flex;
  align-items: center;
  height: 31px;
  margin-bottom: 19px;
}

.select-row label {
  width: 100px;
  padding-bottom: 6px;
}

.select-row .input {
  width: 324px;
  padding-left: 7px;
  line-height: 29px;
  font-size: 15.5px;
}

.select-row button {
  width: 26px;
  height: 28px;
  margin-left: 2px;
}

.pick-list {
  height: 334px;
  background: #fff;
  padding: 1px 6px 0 4px;
}

.pick {
  height: 53px;
  padding: 4px 0 0 4px;
  display: flex;
  gap: 3px;
  border: 1px solid transparent;
  font-size: 15.8px;
}

.pick > span {
  padding-top: 3px;
}

.pick.active {
  height: 52px;
  background: #fccab0;
  border-color: #c9733f;
}

.pick-thumb {
  width: 57px;
  height: 43px;
  border: 1px solid #555;
  text-align: center;
  overflow: hidden;
  font-size: 7px;
  font-weight: bold;
  line-height: 9px;
  white-space: nowrap;
}

.pick-thumb em {
  display: block;
  font-style: normal;
  color: #5c1040;
  font-size: 7px;
}

.pick-lines {
  height: 18px;
  background: #fff;
  display: flex;
  flex-direction: column;
  font-weight: normal;
  font-size: 6px;
}

.select-buttons {
  margin: 1px 0 0 10px;
  display: flex;
  flex-direction: column;
  gap: 11px;
}

.select-buttons button {
  width: 111px;
  height: 32px;
}

.select-buttons .default {
  border: 2px solid #1b74bd;
}

.taskbar {
  position: absolute;
  left: 0;
  top: 1092px;
  width: 2048px;
  height: 60px;
  display: flex;
  align-items: flex-start;
  background: linear-gradient(90deg, #1c1817 0, #1e1b1b 308px, #232225 309px, #232225 1150px, #1b1817 1250px);
  border-bottom: 1px solid #b8b8b8;
  color: #fff;
}

.cloud {
  margin: 11px 0 0 10px;
}

.notify {
  position: relative;
  width: 38px;
  height: 42px;
  margin: 14px 0 0 20px;
}

.notify i {
  position: absolute;
  left: 13px;
  top: 3px;
  width: 25px;
  height: 19px;
  background: linear-gradient(#fff 5px, #222 5px, #222 7px, #fff 7px, #fff 10px, #222 10px, #222 12px, #fff 12px);
}

.notify span {
  position: absolute;
  left: 1px;
  top: 14px;
  width: 25px;
  height: 25px;
  border-radius: 50%;
  border: 1.5px solid #888;
  background: #3d3b3a;
  font: bold 15px/23px "DejaVu Sans", sans-serif;
  text-align: center;
}

.clock {
  width: 72px;
  margin-left: 17px;
  display: flex;
  flex-direction: column;
  align-items: center;
  font: bold 15.5px/25px "DejaVu Sans", sans-serif;
  padding-top: 4px;
  white-space: nowrap;
  color: #eee;
}

.network {
  width: 24px;
  margin: 12px 0 0 8px;
  line-height: 12px;
}

.network svg {
  margin: 1px 0 0 4px;
}

.network span {
  display: block;
  height: 10px;
}

.sound {
  margin: 19px 0 0 11px;
}

.sync {
  margin: 19px 0 0 10px;
}

.chev {
  margin: 21px 0 0 13px;
}

.people {
  margin: 17px 0 0 32px;
}

.lang {
  margin: 15px 0 0 43px;
  font-size: 16px;
}

.apps {
  margin-left: auto;
  padding-right: 0;
  display: flex;
}

.app {
  position: relative;
  width: 73.4px;
  height: 60px;
  padding-bottom: 1px;
  display: flex;
  align-items: center;
  justify-content: center;
}

.app.open::after {
  content: "";
  position: absolute;
  left: 7px;
  right: 7px;
  bottom: 0;
  height: 4px;
  background: #7ab6e6;
}

.app.active {
  background: #555152;
}

.app.active::after {
  left: 0;
  right: 0;
}

.app span {
  position: absolute;
  font-size: 20px;
}

.overlay {
  position: absolute;
  left: 0;
  top: 0;
}

.mark {
  font: bold 35px "Open Sans", sans-serif;
  fill: #f00;
}

.note {
  font-family: "DejaVu Sans", sans-serif;
  font-weight: bold;
  fill: #000;
}

.latin {
  font-family: "Open Sans", sans-serif;
}
</style>
